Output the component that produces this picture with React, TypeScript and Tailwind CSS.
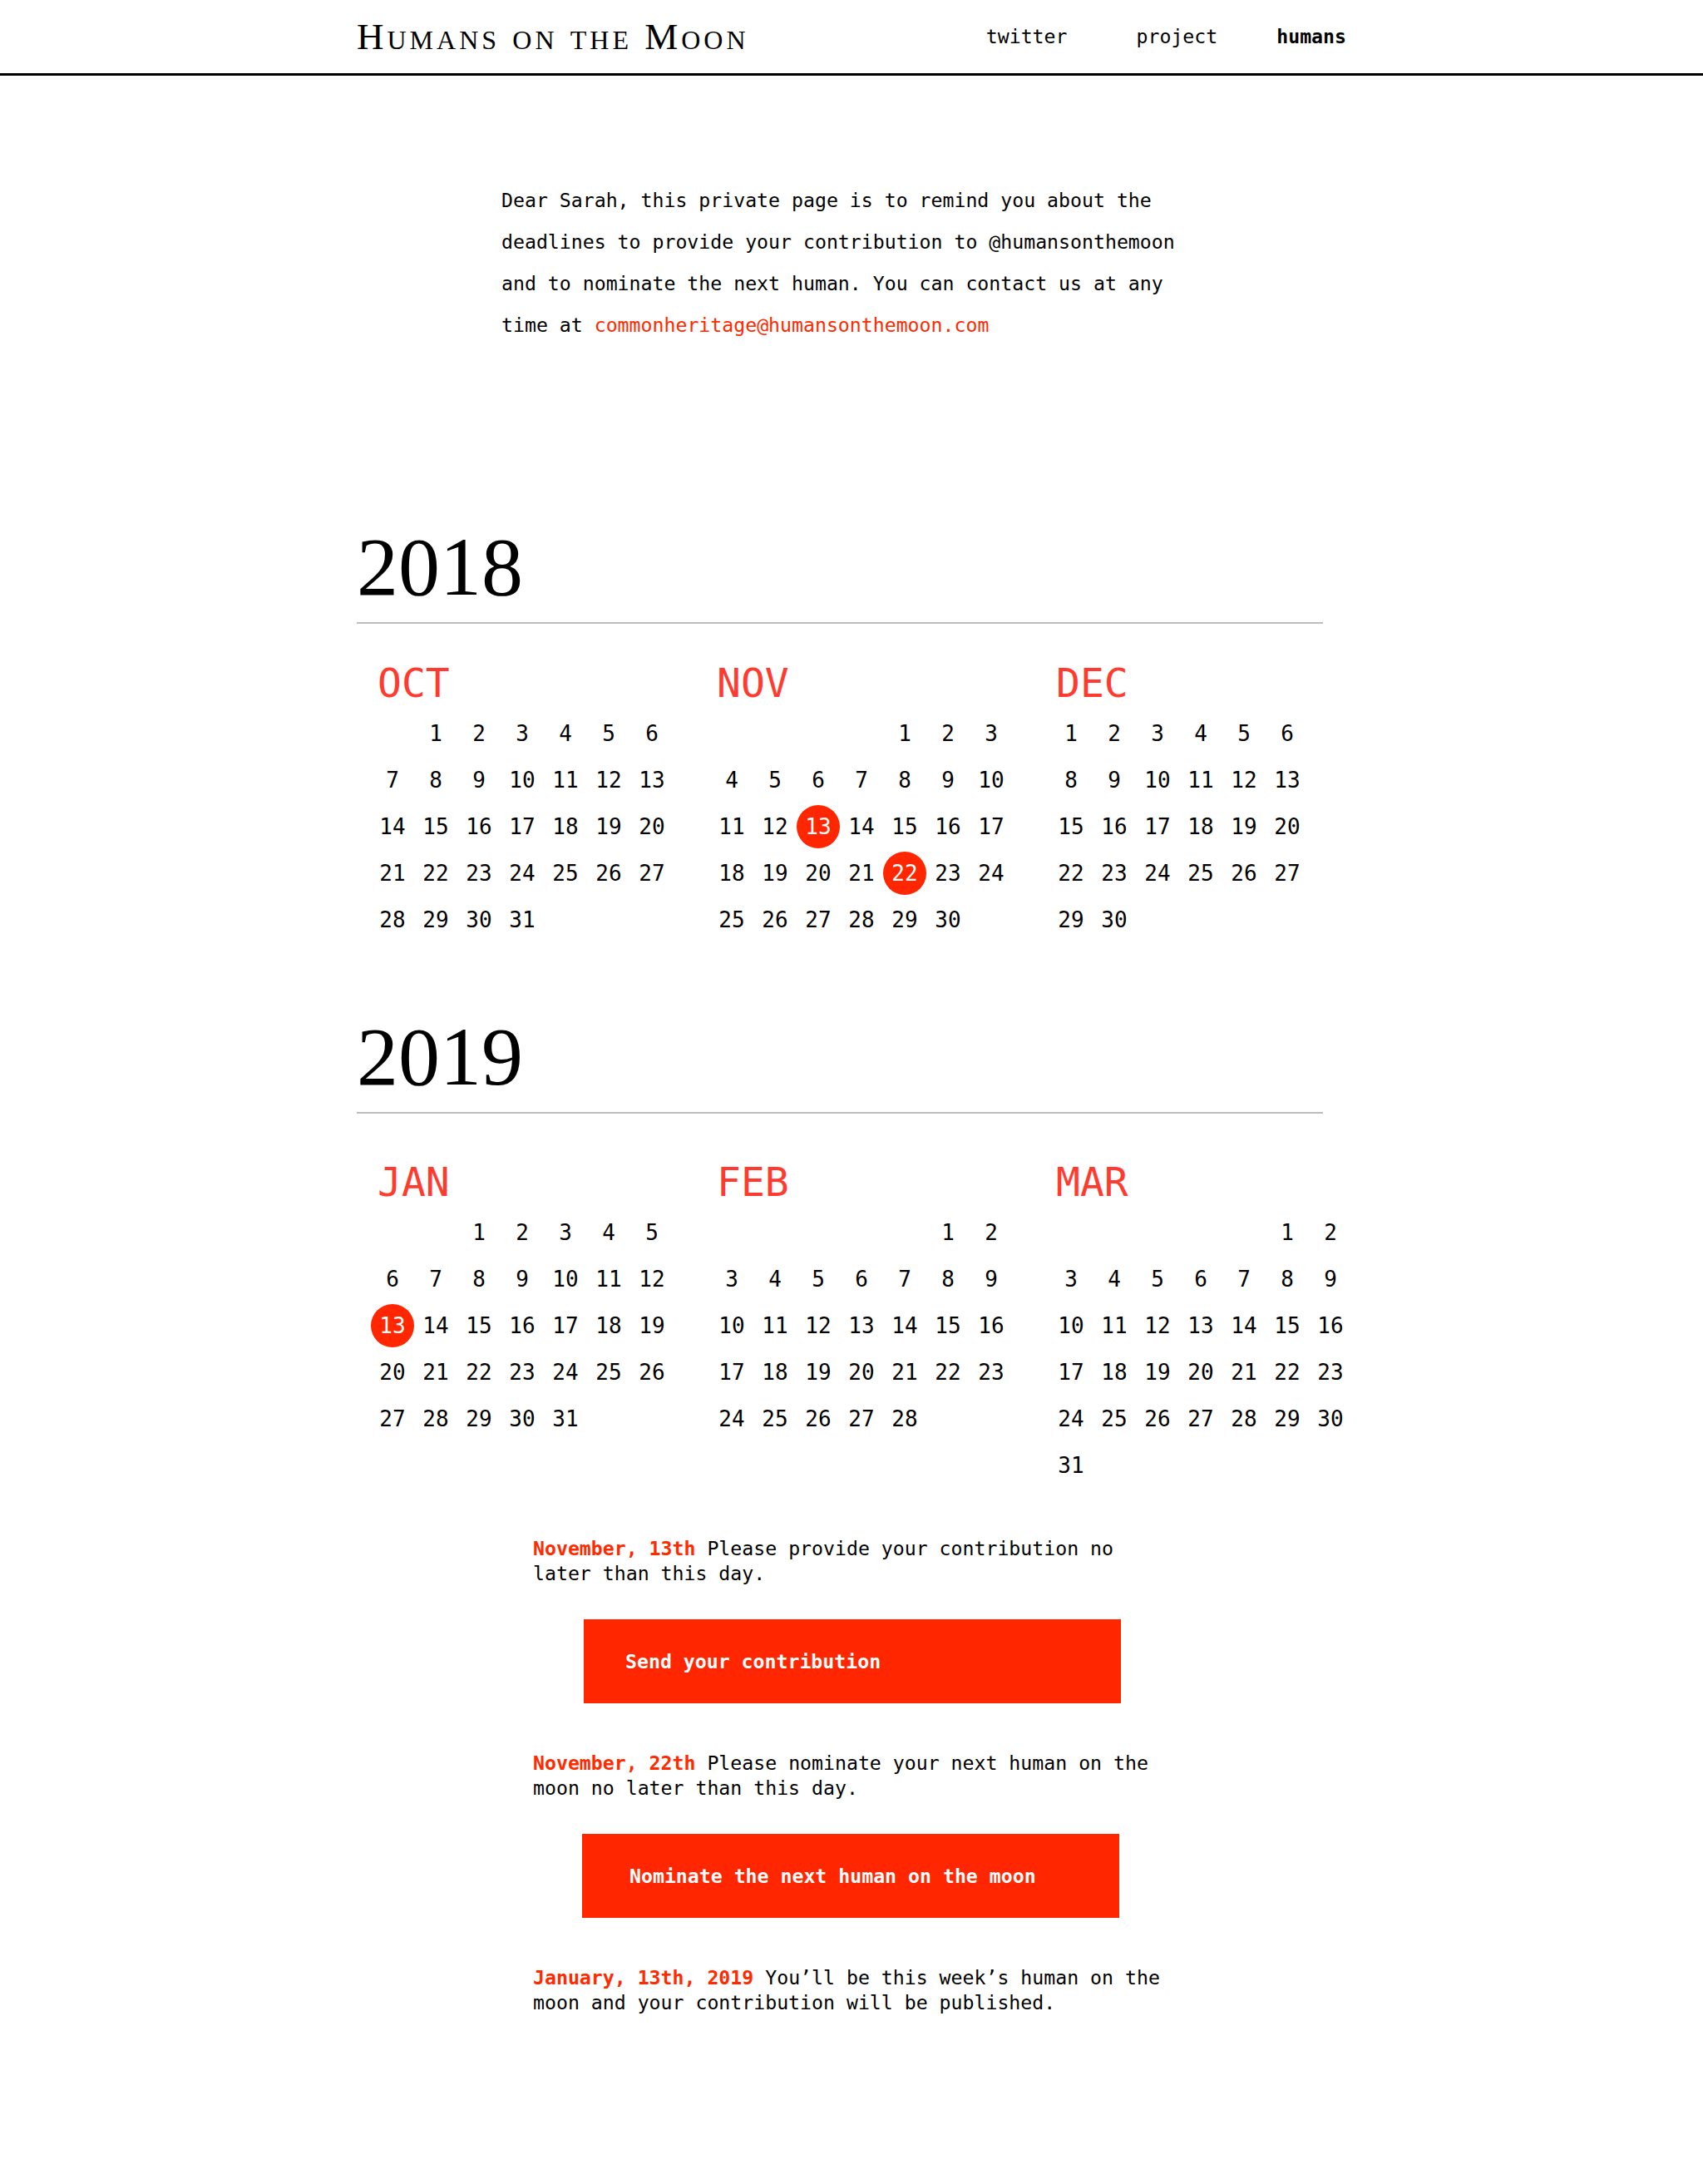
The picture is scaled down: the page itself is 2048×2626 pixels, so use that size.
import React from "react";

type Day = number | null;

function buildWeeks(offset: number, days: number): Day[][] {
  const cells: Day[] = [];
  for (let i = 0; i < offset; i++) cells.push(null);
  for (let d = 1; d <= days; d++) cells.push(d);
  while (cells.length % 7 !== 0) cells.push(null);
  const weeks: Day[][] = [];
  for (let i = 0; i < cells.length; i += 7) weeks.push(cells.slice(i, i + 7));
  return weeks;
}

const decWeeks: Day[][] = [
  [1, 2, 3, 4, 5, 6, null],
  [8, 9, 10, 11, 12, 13, null],
  [15, 16, 17, 18, 19, 20, null],
  [22, 23, 24, 25, 26, 27, null],
  [29, 30, null, null, null, null, null],
];

type Month = { name: string; weeks: Day[][]; marked: number[] };

const months2018: Month[] = [
  { name: "OCT", weeks: buildWeeks(1, 31), marked: [] },
  { name: "NOV", weeks: buildWeeks(4, 30), marked: [13, 22] },
  { name: "DEC", weeks: decWeeks, marked: [] },
];

const months2019: Month[] = [
  { name: "JAN", weeks: buildWeeks(2, 31), marked: [13] },
  { name: "FEB", weeks: buildWeeks(5, 28), marked: [] },
  { name: "MAR", weeks: buildWeeks(5, 31), marked: [] },
];

function MonthBlock({ m }: { m: Month }) {
  return (
    <div className="w-[408px] shrink-0">
      <div className="pl-[8px] text-[48px] leading-none text-[#ff3b2f] h-[48px]">{m.name}</div>
      <div className="mt-[9px] grid grid-cols-[repeat(7,52px)] auto-rows-[56px] text-[26px]">
        {m.weeks.flat().map((d, i) => (
          <div key={i} className="flex items-center justify-center">
            {d !== null &&
              (m.marked.includes(d) ? (
                <span className="flex h-[52px] w-[52px] items-center justify-center rounded-full bg-[#ff2600] text-white">
                  {d}
                </span>
              ) : (
                <span>{d}</span>
              ))}
          </div>
        ))}
      </div>
    </div>
  );
}

function YearSection({
  year,
  months,
  className,
  monthsGap,
}: {
  year: string;
  months: Month[];
  className: string;
  monthsGap: string;
}) {
  return (
    <section className={`mx-auto w-[1190px] ${className}`}>
      <h2 className="font-['Liberation_Serif',serif] text-[100px] leading-none text-black">{year}</h2>
      <div className="mt-[16px] h-[2px] w-[1162px] bg-[#bdbdbd]" />
      <div className={`flex items-start pl-[17px] ${monthsGap}`}>
        {months.map((m) => (
          <MonthBlock key={m.name} m={m} />
        ))}
      </div>
    </section>
  );
}

export default function App() {
  return (
    <div className="min-h-[2626px] w-full bg-white font-['DejaVu_Sans_Mono',monospace] text-black">
      <header className="h-[91px] border-b-[3px] border-black">
        <div className="mx-auto flex h-full w-[1190px] items-center justify-between">
          <div className="font-['Liberation_Serif',serif] text-[45px] leading-none tracking-[4px] [font-variant-caps:small-caps]">
            Humans on the Moon
          </div>
          <nav className="flex text-[23.2px] leading-none">
            <a className="mr-[83px]">twitter</a>
            <a className="mr-[71px]">project</a>
            <a className="font-bold">humans</a>
          </nav>
        </div>
      </header>

      <p className="mx-auto mt-[125px] w-[842px] text-[23.2px] leading-[50px]">
        Dear Sarah, this private page is to remind you about the deadlines to provide your contribution to
        @humansonthemoon and to nominate the next human. You can contact us at any time at{" "}
        <a className="text-[#ff2a00]">commonheritage@humansonthemoon.com</a>
      </p>

      <YearSection year="2018" months={months2018} className="mt-[216px]" monthsGap="mt-[47px]" />
      <YearSection year="2019" months={months2019} className="mt-[87px]" monthsGap="mt-[58px]" />

      <div className="mx-auto mt-[57px] w-[766px] text-[23.2px] leading-[30px]">
        <p>
          <span className="font-bold text-[#ff2a00]">November, 13th</span> Please provide your contribution no
          later than this day.
        </p>
        <button className="ml-[61px] mt-[40px] flex h-[101px] w-[646px] items-center bg-[#ff2600] pl-[50px] text-left font-bold text-white">
          Send your contribution
        </button>
        <p className="mt-[57px]">
          <span className="font-bold text-[#ff2a00]">November, 22th</span> Please nominate your next human on the
          moon no later than this day.
        </p>
        <button className="ml-[59px] mt-[40px] flex h-[101px] w-[646px] items-center bg-[#ff2600] pl-[57px] text-left font-bold text-white">
          Nominate the next human on the moon
        </button>
        <p className="mt-[57px]">
          <span className="font-bold text-[#ff2a00]">January, 13th, 2019</span> You’ll be this week’s human on the
          moon and your contribution will be published.
        </p>
      </div>
    </div>
  );
}
